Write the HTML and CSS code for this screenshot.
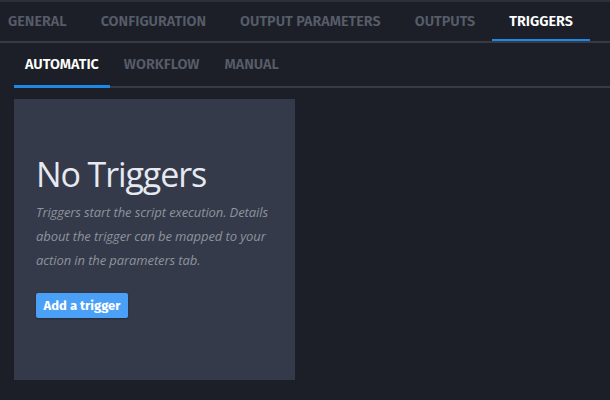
FILE: index.html
```html
<!DOCTYPE html>
<html>
<head>
<meta charset="utf-8">
<link rel="stylesheet" href="styles.css">
</head>
<body>
<div class="page">
  <nav class="tabs">
    <span class="tab">GENERAL</span>
    <span class="tab">CONFIGURATION</span>
    <span class="tab">OUTPUT PARAMETERS</span>
    <span class="tab">OUTPUTS</span>
    <span class="tab active">TRIGGERS</span>
  </nav>
  <div class="content">
    <nav class="subtabs">
      <span class="subtab active">AUTOMATIC</span>
      <span class="subtab">WORKFLOW</span>
      <span class="subtab">MANUAL</span>
    </nav>
    <section class="card">
      <h1 class="title">No Triggers</h1>
      <p class="desc">Triggers start the script execution. Details about the trigger can be mapped to your action in the parameters tab.</p>
      <button class="btn">Add a trigger</button>
    </section>
  </div>
</div>
</body>
</html>
```

FILE: styles.css
```css
html, body {
  margin: 0;
  padding: 0;
  background: #1c1f27;
  height: 100%;
}
.page {
  height: 400px;
  overflow: hidden;
  border-top: 2px solid #2c303b;
  box-sizing: border-box;
  font-family: "Fira Sans", "Open Sans", "Noto Sans", sans-serif;
}
.tabs {
  display: flex;
  margin-left: -9px;
  border-bottom: 2px solid #373b48;
  height: 39px;
}
.tab {
  padding: 1px 17px 0;
  display: flex;
  align-items: center;
  white-space: nowrap;
  font-size: 14.4px;
  font-weight: 600;
  color: #575c69;
  border-bottom: 2px solid transparent;
}
.tab.active {
  color: #ffffff;
  border-bottom-color: #1e88e5;
}
.content {
  padding: 0 0 0 14px;
}
.subtabs {
  display: flex;
  gap: 3px;
  height: 45px;
  border-bottom: 2px solid #373b48;
  box-sizing: border-box;
}
.subtab {
  padding: 0 11px;
  display: flex;
  align-items: center;
  white-space: nowrap;
  font-size: 14.4px;
  font-weight: 600;
  color: #575c69;
  border-bottom: 3px solid transparent;
  margin-bottom: -2px;
}
.subtab.active {
  color: #ffffff;
  border-bottom-color: #1e88e5;
}
.card {
  margin-top: 11px;
  width: 281px;
  height: 281px;
  background: #343a4a;
  box-sizing: border-box;
  padding: 52px 22px 0 22px;
}
.title {
  margin: 0;
  font-family: "Open Sans", "Noto Sans", sans-serif;
  font-weight: 400;
  font-size: 34px;
  line-height: 46px;
  color: #e6e9ef;
  letter-spacing: -1.1px;
}
.desc {
  margin: 3px 0 0 0;
  font-family: "Open Sans", sans-serif;
  font-style: italic;
  font-size: 13px;
  line-height: 24px;
  color: #8e939c;
  letter-spacing: -0.1px;
}
.btn {
  margin-top: 21px;
  display: block;
  height: 25px;
  width: 92px;
  padding: 0;
  border: none;
  border-radius: 2px;
  background: #4aa0f7;
  color: #ffffff;
  font-family: "Fira Sans", "Open Sans", sans-serif;
  font-weight: 700;
  font-size: 13px;
  box-shadow: 0 1px 2px rgba(0,0,0,0.3);
}
```
